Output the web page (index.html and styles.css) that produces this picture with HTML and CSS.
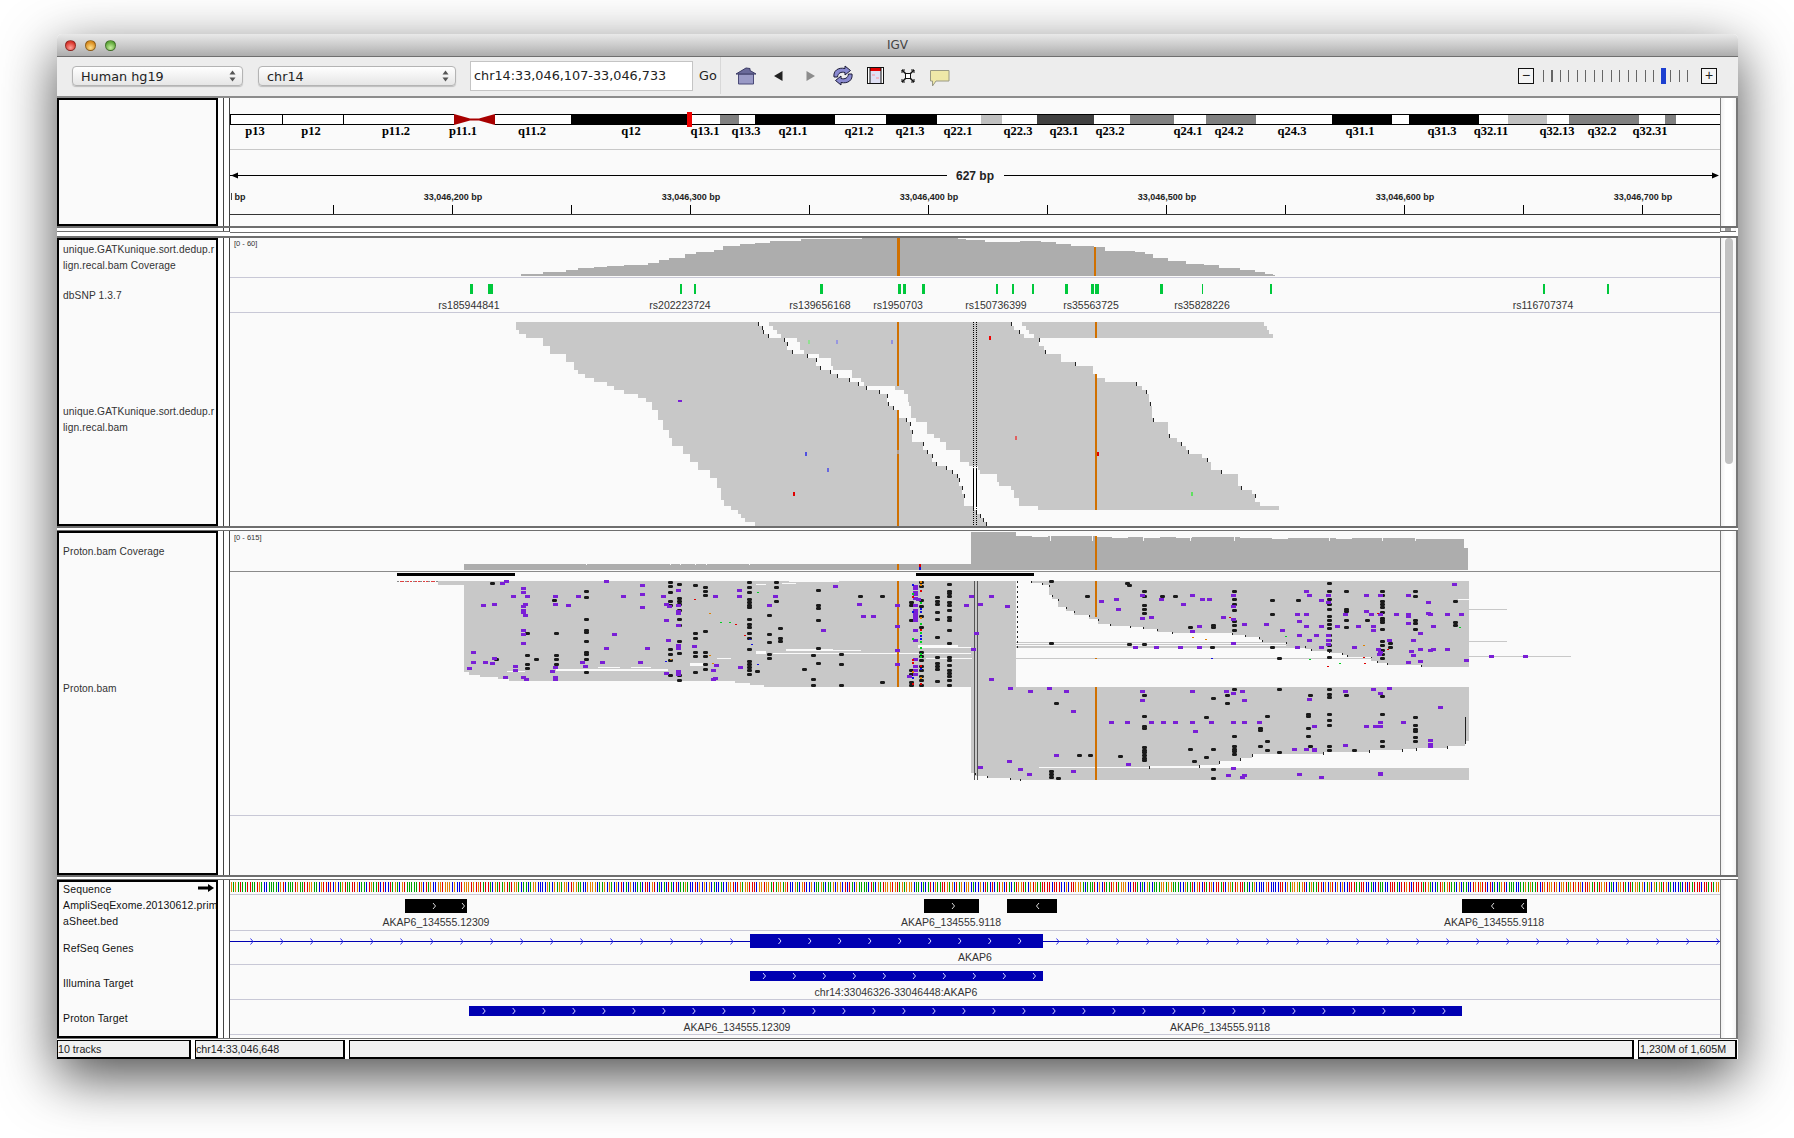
FILE: index.html
```html
<!DOCTYPE html>
<html>
<head>
<meta charset="utf-8">
<title>IGV</title>
<link rel="stylesheet" href="styles.css">
</head>
<body>
<div class="window">

  <div class="titlebar">
    <span class="light light-red"></span>
    <span class="light light-yellow"></span>
    <span class="light light-green"></span>
    <span class="title">IGV</span>
  </div>

  <div class="toolbar">
    <div class="combo combo-genome">Human hg19
      <svg class="updown" width="7" height="12" viewBox="0 0 7 12"><path d="M3.500 0.500L6.500 4.500H0.500Z M3.500 11.500L0.500 7.500H6.500Z" fill="#555"/></svg>
    </div>
    <div class="combo combo-chr">chr14
      <svg class="updown" width="7" height="12" viewBox="0 0 7 12"><path d="M3.500 0.500L6.500 4.500H0.500Z M3.500 11.500L0.500 7.500H6.500Z" fill="#555"/></svg>
    </div>
    <div class="locus">chr14:33,046,107-33,046,733</div>
    <div class="go">Go</div>
    <div class="tools">
      <div class="tool">
        <svg width="22" height="18" viewBox="0 0 22 18">
          <path d="M3.500 7H18.500V17H3.500Z" fill="#9a9ac6" stroke="#4a4a78"/>
          <path d="M1 7L11 1L15 1.500V3.500L21 7Z" fill="#6a6a9a" stroke="#3c3c66"/>
        </svg>
      </div>
      <div class="tool">
        <svg width="9" height="10" viewBox="0 0 9 10"><path d="M8.500 0V10L0 5Z" fill="#222"/></svg>
      </div>
      <div class="tool">
        <svg width="9" height="10" viewBox="0 0 9 10"><path d="M0.500 0V10L9 5Z" fill="#8c8c8c"/></svg>
      </div>
      <div class="tool">
        <svg width="22" height="21" viewBox="0 0 22 21">
          <path d="M2 12C1 6 6 2 13 3.500V1L18.500 5.500L13 10V7.500C9 6.500 6 8 5.500 12Z" fill="#8a8ad0" stroke="#1c1c3a"/>
          <path d="M20 9C21 15 16 19 9 17.500V20L3.500 15.500L9 11V13.500C13 14.500 16 13 16.500 9Z" fill="#8a8ad0" stroke="#1c1c3a"/>
        </svg>
      </div>
      <div class="tool">
        <svg width="17" height="17" viewBox="0 0 17 17">
          <rect x="0.500" y="0.500" width="16" height="16" fill="#fff" stroke="#111"/>
          <rect x="3" y="1" width="11" height="15" fill="#dfe0f4"/>
          <rect x="3" y="1" width="11" height="3" fill="#e00000"/>
          <path d="M3 1V16M14 1V16" stroke="#111"/>
          <path d="M5 7h3v2h-3zM9 10h3v2h-3z" fill="#eeb8c8"/>
        </svg>
      </div>
      <div class="tool">
        <svg width="14" height="14" viewBox="0 0 14 14">
          <rect x="4.500" y="4.500" width="5" height="5" fill="#fff" stroke="#111"/>
          <path d="M1 1L4.500 4.500M13 1L9.500 4.500M1 13L4.500 9.500M13 13L9.500 9.500" stroke="#111" stroke-width="1.500"/>
          <path d="M1 4V1H4M10 1H13V4M1 10V13H4M10 13H13V10" fill="none" stroke="#111"/>
        </svg>
      </div>
      <div class="tool tool-note">
        <svg width="20" height="17" viewBox="0 0 20 17">
          <path d="M0.500 0.500H19V11H6L2.500 16V11H0.500Z" fill="#efe8a8" stroke="#9a9a84"/>
        </svg>
      </div>
    </div>
    <div class="zoombar">
      <div class="zoombtn">&minus;</div>
      <div class="zoomticks"><span class="zoomthumb"></span></div>
      <div class="zoombtn">+</div>
    </div>
  </div>

  <div class="row row-header">
    <div class="names"></div>
    <div class="attr"></div>
    <div class="data">
      <svg id="header" class="canvas" width="1490" height="128" viewBox="230 98 1490 128">
        <g class="cyto">
          <text x="255" y="135">p13</text><text x="311" y="135">p12</text><text x="396" y="135">p11.2</text>
          <text x="463" y="135">p11.1</text><text x="532" y="135">q11.2</text><text x="631" y="135">q12</text>
          <text x="705" y="135">q13.1</text><text x="746" y="135">q13.3</text><text x="793" y="135">q21.1</text>
          <text x="859" y="135">q21.2</text><text x="910" y="135">q21.3</text><text x="958" y="135">q22.1</text>
          <text x="1018" y="135">q22.3</text><text x="1064" y="135">q23.1</text><text x="1110" y="135">q23.2</text>
          <text x="1188" y="135">q24.1</text><text x="1229" y="135">q24.2</text><text x="1292" y="135">q24.3</text>
          <text x="1360" y="135">q31.1</text><text x="1442" y="135">q31.3</text><text x="1491" y="135">q32.11</text>
          <text x="1557" y="135">q32.13</text><text x="1602" y="135">q32.2</text><text x="1650" y="135">q32.31</text>
        </g>
        <text class="span" x="975" y="180">627 bp</text>
        <g class="ruler">
          <text class="ruler-first" x="234.500" y="200">bp</text><text x="453" y="200">33,046,200 bp</text>
          <text x="691" y="200">33,046,300 bp</text><text x="929" y="200">33,046,400 bp</text>
          <text x="1167" y="200">33,046,500 bp</text><text x="1405" y="200">33,046,600 bp</text>
          <text x="1643" y="200">33,046,700 bp</text>
        </g>
      </svg>
    </div>
    <div class="scroll"></div>
  </div>

  <div class="divider-small">
    <div class="names"></div>
    <div class="attr"></div>
    <div class="data"></div>
    <div class="scroll"><span class="nub"></span></div>
  </div>

  <div class="row row-first">
    <div class="names names-first">
      <div class="label">unique.GATKunique.sort.dedup.r</div>
      <div class="label">lign.recal.bam Coverage</div>
      <div class="label label-dbsnp">dbSNP 1.3.7</div>
      <div class="label label-bam">unique.GATKunique.sort.dedup.r</div>
      <div class="label">lign.recal.bam</div>
    </div>
    <div class="attr"></div>
    <div class="data">
      <svg id="first" class="canvas" width="1490" height="288" viewBox="230 238 1490 288">
        <text class="range" x="234" y="246">[0 - 60]</text>
        <g class="feature">
          <text x="469" y="309">rs185944841</text><text x="680" y="309">rs202223724</text>
          <text x="820" y="309">rs139656168</text><text x="898" y="309">rs1950703</text>
          <text x="996" y="309">rs150736399</text><text x="1091" y="309">rs35563725</text>
          <text x="1202" y="309">rs35828226</text><text x="1543" y="309">rs116707374</text>
        </g>
      </svg>
    </div>
    <div class="scroll"><span class="thumb"></span></div>
  </div>

  <div class="gap"></div>

  <div class="row row-proton">
    <div class="names names-proton">
      <div class="label">Proton.bam Coverage</div>
      <div class="label label-proton">Proton.bam</div>
    </div>
    <div class="attr"></div>
    <div class="data">
      <svg id="proton" class="canvas" width="1490" height="344" viewBox="230 531 1490 344">
        <text class="range" x="234" y="540">[0 - 615]</text>
      </svg>
    </div>
    <div class="scroll"></div>
  </div>

  <div class="gap"></div>

  <div class="row row-feature">
    <div class="names names-feature">
      <div class="label label-dark label-seq">Sequence
        <svg class="seqarrow" width="16" height="8" viewBox="0 0 16 8"><path d="M0 2.500H10V0L16 4L10 8V5.500H0Z" fill="#000"/></svg>
      </div>
      <div class="label label-dark">AmpliSeqExome.20130612.prim</div>
      <div class="label label-dark">aSheet.bed</div>
      <div class="label label-dark label-ref">RefSeq Genes</div>
      <div class="label label-dark label-ill">Illumina Target</div>
      <div class="label label-dark label-pro">Proton Target</div>
    </div>
    <div class="attr"></div>
    <div class="data">
      <svg id="features" class="canvas" width="1490" height="158" viewBox="230 880 1490 158">
        <g class="feature">
          <text x="436" y="926">AKAP6_134555.12309</text><text x="951" y="926">AKAP6_134555.9118</text>
          <text x="1494" y="926">AKAP6_134555.9118</text><text x="975" y="961">AKAP6</text>
          <text x="896" y="996">chr14:33046326-33046448:AKAP6</text>
          <text x="737" y="1031">AKAP6_134555.12309</text><text x="1220" y="1031">AKAP6_134555.9118</text>
        </g>
      </svg>
    </div>
    <div class="scroll"></div>
  </div>

  <div class="statusbar">
    <div class="status status-tracks">10 tracks</div>
    <div class="status status-locus">chr14:33,046,648</div>
    <div class="status status-fill"></div>
    <div class="status status-mem">1,230M of 1,605M</div>
  </div>

</div>
<script src="app.js"></script>
</body>
</html>
```

FILE: styles.css
```css
html, body {
  margin: 0;
  background: #fff;
}

body {
  width: 1794px;
  height: 1138px;
  overflow: hidden;
  padding: 34px 0 0 57px;
  box-sizing: border-box;
  font-family: "Liberation Sans", Arial, sans-serif;
}

.window {
  width: 1681px;
  height: 1025px;
  background: #fff;
  border-radius: 5px 5px 0 0;
  box-shadow: 0 18px 55px rgba(0, 0, 0, 0.7);
  display: flex;
  flex-direction: column;
}

/* title bar */

.titlebar {
  height: 23px;
  flex: none;
  display: flex;
  align-items: center;
  padding-left: 8px;
  gap: 9px;
  border-radius: 5px 5px 0 0;
  border-bottom: 1px solid #6f6f6f;
  box-sizing: border-box;
  background: linear-gradient(#e9e9e9, #c9c9c9 55%, #adadad);
  position: relative;
}

.light {
  width: 11px;
  height: 11px;
  border-radius: 50%;
  border: 1px solid rgba(0, 0, 0, 0.35);
  box-sizing: border-box;
}

.light-red { background: radial-gradient(circle at 50% 75%, #ff9f98, #d9342c 70%); }
.light-yellow { background: radial-gradient(circle at 50% 75%, #ffe08a, #d98c1f 70%); }
.light-green { background: radial-gradient(circle at 50% 75%, #c8f0a0, #5fa83a 70%); }

.title {
  position: absolute;
  left: 0;
  right: 0;
  text-align: center;
  font: 12px "DejaVu Sans", sans-serif;
  color: #444;
}

/* toolbar */

.toolbar {
  height: 41px;
  flex: none;
  display: flex;
  align-items: center;
  box-sizing: border-box;
  padding: 0 21px 2px 15px;
  background: #ededed;
  border-bottom: 2px solid #8c8c8c;
  font: 12.8px "DejaVu Sans", sans-serif;
  color: #222;
}

.combo {
  height: 20px;
  line-height: 19px;
  box-sizing: border-box;
  padding-left: 8px;
  border: 1px solid #b4b4b4;
  border-radius: 4px;
  background: linear-gradient(#ffffff, #f2f2f2 50%, #e6e6e6);
  box-shadow: 0 1px 1px rgba(0, 0, 0, 0.2);
  position: relative;
}

.updown {
  position: absolute;
  right: 6px;
  top: 3px;
}

.combo-genome { width: 171px; }
.combo-chr { width: 198px; margin-left: 15px; }

.locus {
  width: 223px;
  height: 30px;
  line-height: 28px;
  margin-left: 14px;
  padding-left: 3px;
  box-sizing: border-box;
  background: #fff;
  border: 1px solid #c4c4c4;
  white-space: nowrap;
}

.go {
  margin-left: 6px;
  width: 21px;
}

.tools {
  display: flex;
  align-items: center;
  padding-left: 9px;
  border-left: 1px solid #d8d8d8;
  height: 37px;
}

.tool {
  width: 32.3px;
  display: flex;
  justify-content: center;
}

.tool-note { margin-top: 5px; }

.zoombar {
  margin-left: auto;
  display: flex;
  align-items: center;
}

.zoombtn {
  width: 16px;
  height: 16px;
  box-sizing: border-box;
  border: 1px solid #111;
  background: #f4f4f4;
  font: 14px/13px "Liberation Sans", sans-serif;
  text-align: center;
}

.zoomticks {
  width: 150px;
  height: 12px;
  margin: 0 8px 0 9px;
  position: relative;
  background: repeating-linear-gradient(90deg, #666 0 1px, transparent 1px 8.5px);
}

.zoomthumb {
  position: absolute;
  left: 118px;
  top: -2px;
  width: 5px;
  height: 16px;
  background: #1c3fd0;
}

/* track rows */

.row, .divider-small {
  flex: none;
  display: flex;
  background: #777;
}

.row-header { height: 128px; border-bottom: 2px solid #6e6e6e; }
.divider-small { height: 8px; border-bottom: 2px solid #6e6e6e; }
.row-first { height: 288px; }
.row-proton { height: 344px; }
.row-feature { height: 158px; }

.divider-small { background: #fff; }
.divider-small .data { background: #fff; border-bottom: 1px solid #6e6e6e; height: 4px; }
.divider-small .names, .divider-small .attr, .divider-small .scroll { height: 4px; border-bottom: 1px solid #6e6e6e; }
.divider-small .names { border: 0; border-bottom: 1px solid #6e6e6e; }

.gap {
  flex: none;
  height: 5px;
  box-sizing: border-box;
  background: #fff;
  border-top: 2px solid #6e6e6e;
  border-bottom: 1px solid #6e6e6e;
}

.names {
  width: 161px;
  flex: none;
  box-sizing: border-box;
  border: 2px solid #000;
  background: #fafafa;
  padding-left: 4px;
  overflow: hidden;
}

.attr {
  width: 12px;
  flex: none;
  background: #fff linear-gradient(#444, #444) no-repeat;
  background-size: 1px 100%;
  background-position: 5px 0;
  border-right: 1px solid #444;
  box-sizing: border-box;
}

.data {
  width: 1490px;
  flex: none;
  background: #fafafa;
  overflow: hidden;
}

.scroll {
  width: 16px;
  flex: none;
  box-sizing: border-box;
  border-left: 1px solid #7c7c7c;
  background: linear-gradient(90deg, #f1f1f1, #fff 30%, #fff 70%, #f4f4f4);
  padding-left: 4px;
}

.thumb {
  display: block;
  width: 8px;
  height: 226px;
  border-radius: 4px;
  background: #c2c2c2;
}

.nub {
  display: block;
  width: 6px;
  height: 3px;
  background: #9a9a9a;
}

.canvas {
  display: block;
  shape-rendering: crispEdges;
}

.label {
  height: 16px;
  line-height: 16px;
  font-size: 10.2px;
  letter-spacing: 0.1px;
  color: #333;
  white-space: nowrap;
  position: relative;
}

.label-dark {
  color: #111;
  font-size: 10.5px;
  letter-spacing: 0.15px;
}

.names-first { padding-top: 2px; }
.label-dbsnp { margin-top: 14px; }
.label-bam { margin-top: 100px; }

.names-proton { padding-top: 11px; }
.label-proton { margin-top: 121px; }

.names-feature { padding-top: 0; }
.label-seq { margin-top: -1px; }
.label-ref { margin-top: 11px; }
.label-ill { margin-top: 19px; }
.label-pro { margin-top: 19px; }

.seqarrow {
  position: absolute;
  left: 135px;
  top: 3px;
}

/* svg text */

.cyto text {
  font: bold 12.5px "Liberation Serif", serif;
  text-anchor: middle;
  fill: #000;
}

.ruler text {
  font: bold 9px "Liberation Sans", sans-serif;
  text-anchor: middle;
  fill: #222;
}

.ruler .ruler-first { text-anchor: start; }

.span {
  font: bold 12px "Liberation Sans", sans-serif;
  text-anchor: middle;
  fill: #222;
}

.range {
  font: 7.5px "Liberation Sans", sans-serif;
  fill: #333;
}

.feature text {
  font: 10.5px "Liberation Sans", sans-serif;
  text-anchor: middle;
  fill: #333;
}

/* status bar */

.statusbar {
  flex: 1;
  display: flex;
  align-items: stretch;
  background: #fff;
  border-top: 1px solid #777;
  padding-top: 1px;
}

.status {
  box-sizing: border-box;
  border: 1px solid #000;
  border-width: 1px 2px 2px 1px;
  background: #f0f0f0;
  font-size: 10.7px;
  line-height: 16px;
  color: #222;
  white-space: nowrap;
  margin-right: 4px;
}

.status-tracks { width: 134px; }
.status-locus { width: 150px; }
.status-fill { width: 1285px; }
.status-mem { width: 99px; margin-right: 0; padding-left: 1px; }
```

FILE: app.js
```js
// draws the tracks: everything is in window pixel coordinates, the svg viewBoxes line up with them
var NS = "http://www.w3.org/2000/svg";

var READ = "#c8c8c8";
var COVER = "#adadad";
var ORANGE = "#d07000";
var PURPLE = "#7a1fd6";
var SEPARATOR = "#c8c8d6";
var BLUE = "#0000b2";

function add(svg, tag, attrs) {
  var el = document.createElementNS(NS, tag);
  for (var k in attrs) el.setAttribute(k, attrs[k]);
  svg.insertBefore(el, svg.firstElementChild && svg.firstElementChild.tagName === "text" ? svg.firstElementChild : null);
  return el;
}

function rect(svg, x, y, w, h, fill) {
  return add(svg, "rect", { x: Math.round(x), y: Math.round(y), width: Math.max(1, Math.round(w)), height: h, fill: fill });
}

function edgeAt(pts, y) {
  var x = pts[0][1];
  for (var i = 0; i < pts.length; i++) {
    if (pts[i][0] <= y) x = pts[i][1];
  }
  return x;
}

// stacked reads, left and right edges are [y, x] steps
function pile(svg, left, right, from, bottom, fill) {
  var d = "";
  for (var y = from; y < bottom; y++) {
    var a = Math.round(edgeAt(left, y));
    var b = Math.round(edgeAt(right, y));
    if (b > a) d += "M" + a + " " + y + "H" + b + "V" + (y + 1) + "H" + a + "Z";
  }
  add(svg, "path", { d: d, fill: fill || READ });
}

function ticks(svg, pts, h, every) {
  for (var i = 0; i < pts.length; i += every || 1) {
    rect(svg, pts[i][1], pts[i][0], 1, h, "#222");
  }
}

function chevron(svg, x, y, dir, color) {
  add(svg, "path", {
    d: "M" + (x - dir) + " " + (y - 3) + "L" + (x + dir * 1.5) + " " + y + "L" + (x - dir) + " " + (y + 3),
    fill: "none", stroke: color, "stroke-width": 1, style: "shape-rendering:auto"
  });
}

// small repeatable random, so that every load gives the same picture
var seed = 7;
function rnd() {
  seed = (seed * 16807) % 2147483647;
  return (seed % 1000) / 1000;
}

/* ---------- header: cytoband and ruler ---------- */

var header = document.getElementById("header");
var bands = [
  [230, 282, "#fff"], [282, 343, "#fff"], [343, 454, "#fff"],
  [495, 571, "#fff"], [571, 687, "#000"], [687, 720, "#fff"], [720, 739, "#808080"],
  [739, 755, "#fff"], [755, 835, "#000"], [835, 886, "#fff"], [886, 937, "#000"],
  [937, 981, "#fff"], [981, 1002, "#c0c0c0"], [1002, 1037, "#fff"], [1037, 1094, "#404040"],
  [1094, 1130, "#fff"], [1130, 1174, "#808080"], [1174, 1206, "#fff"], [1206, 1256, "#808080"],
  [1256, 1332, "#fff"], [1332, 1392, "#000"], [1392, 1409, "#fff"], [1409, 1479, "#000"],
  [1479, 1508, "#fff"], [1508, 1547, "#c0c0c0"], [1547, 1569, "#fff"], [1569, 1639, "#808080"],
  [1639, 1665, "#fff"], [1665, 1676, "#808080"], [1676, 1720, "#fff"]
];
bands.forEach(function (b) {
  rect(header, b[0], 114, b[1] - b[0], 11, b[2]);
});
rect(header, 230, 114, 224, 1, "#000");
rect(header, 230, 124, 224, 1, "#000");
rect(header, 495, 114, 1225, 1, "#000");
rect(header, 495, 124, 1225, 1, "#000");
[230, 282, 343].forEach(function (x) { rect(header, x, 114, 1, 11, "#000"); });
add(header, "path", { d: "M454 114V125L470 120.500H479L495 125V114L479 118.500H470Z", fill: "#a80000", style: "shape-rendering:auto" });
rect(header, 687, 112, 5, 15, "#f00000");
rect(header, 230, 149, 1490, 1, "#c8c8c8");
rect(header, 230, 175, 717, 1, "#000");
rect(header, 1004, 175, 714, 1, "#000");
add(header, "path", { d: "M231 175.500L238 172.500V178.500Z M1719 175.500L1712 172.500V178.500Z", fill: "#000", style: "shape-rendering:auto" });
for (var t = 333; t < 1700; t += 119) rect(header, t, 205, 1, 10, "#000");
rect(header, 231, 193, 1, 7, "#444");
rect(header, 230, 214, 1490, 1, "#333");

/* ---------- first sample: coverage, dbSNP, reads ---------- */

var first = document.getElementById("first");

var coverage = [
  [521, 274], [543, 272], [566, 270], [578, 268], [594, 267], [607, 266], [624, 265], [648, 263], [659, 260],
  [669, 258], [685, 254], [696, 252], [714, 250], [723, 246], [740, 244], [755, 243], [770, 241], [801, 239],
  [862, 238], [958, 239], [966, 240], [985, 242], [1020, 241], [1041, 242], [1056, 244], [1071, 246], [1094, 247],
  [1105, 251], [1135, 252], [1145, 254], [1153, 258], [1168, 261], [1186, 264], [1204, 265], [1219, 268], [1240, 270],
  [1255, 272], [1265, 274], [1273, 275]
];
coverage.forEach(function (c, i) {
  var next = coverage[i + 1] ? coverage[i + 1][0] : 1275;
  rect(first, c[0], c[1], next - c[0], 276 - c[1], COVER);
});
rect(first, 897, 238, 3, 38, ORANGE);
rect(first, 1094, 247, 2, 29, ORANGE);
rect(first, 230, 277, 1490, 1, SEPARATOR);
rect(first, 230, 312, 1490, 1, SEPARATOR);

var snps = [[470, 3], [488, 5], [680, 2], [694, 2], [820, 3], [898, 3], [903, 3], [922, 3], [996, 2], [1012, 2],
  [1032, 2], [1065, 3], [1091, 3], [1095, 4], [1160, 3], [1202, 1], [1270, 2], [1543, 2], [1607, 2]];
snps.forEach(function (s) { rect(first, s[0], 284, s[1], 10, "#00c83c"); });

var pileALeft = [[322, 516], [330, 519], [334, 526], [338, 543], [346, 550], [354, 566], [362, 574], [370, 578], [374, 585],
  [378, 594], [382, 607], [386, 614], [390, 624], [394, 638], [398, 646], [402, 652], [410, 658], [420, 663], [430, 669],
  [438, 672], [446, 683], [454, 690], [462, 698], [470, 710], [478, 717], [488, 721], [500, 724], [506, 731], [510, 738],
  [514, 741], [518, 745], [522, 755]];
var gapLeft = [[322, 758], [326, 762], [330, 763], [334, 768], [338, 784], [342, 787], [350, 792], [354, 807], [358, 816],
  [366, 820], [370, 830], [374, 837], [378, 849], [382, 858], [386, 866], [390, 879], [394, 887], [402, 888], [406, 893],
  [410, 897], [418, 906], [422, 910], [430, 912], [442, 923], [450, 927], [454, 932], [462, 936], [466, 946], [470, 952],
  [474, 957], [478, 959], [486, 962], [494, 964], [506, 973], [510, 976], [514, 980], [518, 983], [522, 986]];
var gapRight = [[322, 769], [326, 773], [330, 777], [334, 781], [338, 797], [342, 800], [350, 804], [354, 819], [358, 831],
  [366, 833], [370, 852], [378, 861], [382, 864], [386, 895], [390, 904], [394, 908], [402, 909], [406, 911], [418, 916],
  [422, 927], [434, 934], [438, 940], [442, 946], [450, 960], [462, 969], [466, 978], [470, 980], [474, 997], [482, 999],
  [486, 1011], [490, 1014], [498, 1019], [506, 1038]];
var gap2Left = [[322, 1011], [326, 1014], [330, 1019], [334, 1024], [338, 1039], [346, 1044], [350, 1045], [354, 1061],
  [362, 1075], [366, 1093], [374, 1096], [378, 1105], [382, 1136], [386, 1142], [390, 1146], [394, 1149], [402, 1150],
  [406, 1152], [418, 1153], [422, 1168], [434, 1169], [438, 1177], [442, 1181], [446, 1186], [450, 1188], [454, 1202],
  [458, 1207], [462, 1211], [470, 1221], [474, 1238], [486, 1241], [490, 1252], [494, 1255], [502, 1260], [506, 1279]];

pile(first, pileALeft, gapLeft, 322, 526);
pile(first, gapRight, gap2Left, 322, 510);
pile(first, [[322, 1022], [326, 1026], [330, 1029], [334, 1034]], [[322, 1264], [326, 1267], [330, 1269], [334, 1273]], 322, 338);

ticks(first, gapLeft, 4);
ticks(first, gap2Left.slice(0, 34), 4, 2);

rect(first, 897, 322, 2, 64, ORANGE);
rect(first, 897, 410, 2, 40, ORANGE);
rect(first, 897, 450, 2, 4, "#b4a090");
rect(first, 897, 454, 2, 72, ORANGE);
rect(first, 1095, 322, 2, 16, ORANGE);
rect(first, 1095, 374, 2, 136, ORANGE);

for (var d = 322; d < 526; d += 2) {
  var inWhite = d > 466 && d < 506;
  rect(first, 973, d, 1, inWhite ? 2 : 1, "#000");
  rect(first, 976, d, 1, inWhite ? 2 : 1, "#000");
}

[[989, 336, 2, "#f00000"], [1015, 436, 2, "#e06060"], [1097, 452, 2, "#e00000"], [1191, 492, 2, "#60e060"],
  [793, 492, 2, "#e00000"], [805, 452, 2, "#5050e0"], [827, 468, 2, "#6868e0"], [808, 340, 2, "#90e090"],
  [836, 340, 2, "#9898e0"], [891, 340, 2, "#9090e0"], [678, 400, 4, PURPLE]].forEach(function (m) {
  rect(first, m[0], m[1], m[2], m[2] === 4 ? 2 : 4, m[3]);
});

/* ---------- proton sample ---------- */

var proton = document.getElementById("proton");

rect(proton, 464, 564, 508, 6, COVER);
rect(proton, 971, 532, 45, 38, COVER);
for (var c = 1016; c < 1464; c += 16) {
  var level = 536 + Math.round((c - 1016) / 160) + (rnd() > 0.7 ? 1 : 0);
  rect(proton, c, level, 16, 570 - level, COVER);
}
rect(proton, 1464, 548, 4, 22, COVER);
[1143, 1234, 1329, 1382, 1415, 1050, 1092, 1190].forEach(function (n) { rect(proton, n, 536, 1, 5, "#fafafa"); });
[586, 670, 680, 695, 706, 749].forEach(function (n) { rect(proton, n, 564, 1, 1, "#fafafa"); });
rect(proton, 897, 564, 2, 6, ORANGE);
rect(proton, 1095, 536, 2, 34, ORANGE);
rect(proton, 919, 564, 2, 3, "#e00000");
rect(proton, 919, 567, 2, 3, "#1010d0");
rect(proton, 230, 571, 1490, 1, "#8a8a8a");
rect(proton, 397, 573, 118, 3, "#000");
rect(proton, 916, 573, 118, 3, "#000");

// left block and the strip the reads hang from
pile(proton, [[581, 438]], [[581, 464]], 581, 585);
pile(proton, [[581, 464], [672, 469], [675, 480], [677, 498], [679, 509], [681, 735], [683, 750], [685, 764]], [[581, 1016]], 581, 687);

// upper right block
var upperRight = [[581, 1031], [583, 1042], [585, 1049], [595, 1052], [599, 1058], [607, 1066], [611, 1074], [615, 1089],
  [619, 1098], [624, 1110], [626, 1130], [627, 1143], [629, 1157], [632, 1172], [633, 1232], [635, 1245], [637, 1259],
  [640, 1262], [642, 1286], [646, 1305], [649, 1311], [651, 1329], [653, 1342], [655, 1347], [657, 1371], [661, 1377],
  [663, 1387], [665, 1421]];
pile(proton, upperRight, [[581, 1469]], 581, 667);
ticks(proton, upperRight, 2);

// lower right block
var lowerRight = [[687, 1469], [741, 1465], [746, 1447], [748, 1416], [749, 1402], [750, 1369], [752, 1323], [754, 1252],
  [758, 1240], [761, 1219], [765, 1199], [766, 1149], [767, 1039], [768, 1469]];
pile(proton, [[687, 971], [773, 975], [776, 987], [778, 1010]], lowerRight, 687, 780);
ticks(proton, lowerRight.slice(1, 12), 3);
rect(proton, 1465, 717, 1, 24, "#222");
ticks(proton, [[773, 975], [776, 987], [778, 1010], [779, 1020]], 2);

// thin reads across the white gap
rect(proton, 1016, 642, 270, 1, READ);
rect(proton, 1016, 644, 270, 1, READ);
rect(proton, 1016, 646, 289, 2, READ);
rect(proton, 1016, 658, 357, 1, READ);
rect(proton, 1469, 609, 38, 1, READ);
rect(proton, 1469, 641, 38, 1, READ);
rect(proton, 1469, 656, 102, 1, READ);

// white strands inside the left block
[[556, 669, 112, 2], [598, 667, 22, 1], [631, 667, 20, 1], [507, 671, 18, 1], [756, 651, 10, 3], [773, 653, 198, 1],
  [786, 649, 47, 2], [833, 650, 28, 1], [918, 645, 40, 3], [958, 647, 13, 1], [926, 658, 46, 1], [690, 663, 16, 3],
  [717, 658, 14, 1], [756, 584, 10, 1], [782, 583, 14, 1], [789, 581, 50, 1], [1458, 599, 11, 1]].forEach(function (w) {
  rect(proton, w[0], w[1], w[2], w[3], "#fafafa");
});
for (var e = 581; e < 650; e += 5) rect(proton, 1017, e, 1, 2, "#222");

rect(proton, 897, 581, 2, 106, ORANGE);
rect(proton, 1095, 581, 2, 36, ORANGE);
rect(proton, 1095, 658, 2, 1, ORANGE);
rect(proton, 1095, 687, 2, 93, ORANGE);
rect(proton, 974, 581, 1, 199, "#555");
rect(proton, 977, 581, 1, 199, "#555");

// marks are read off two crops of the reference, so they stay in crop units here
function place(list, sx, ox, w, h, color, soft) {
  list.forEach(function (p) {
    var el = rect(proton, p[0] / sx + ox - w / 2, p[1] / 3 + 530 - h / 2, w, h, color);
    if (soft) {
      el.setAttribute("rx", 1.2);
      el.setAttribute("style", "shape-rendering:auto");
    }
  });
}
function crop5(list, w, h, color, soft) { place(list, 2.24, 380, w, h, color, soft); }
function crop6(list, w, h, color, soft) { place(list, 2.412, 950, w, h, color, soft); }
function columns(cols) {
  var out = [];
  cols.forEach(function (col) { col[1].forEach(function (y) { out.push([col[0], y]); }); });
  return out;
}

crop5(columns([
  [650, [156, 170, 186, 213, 227, 358, 372, 390, 437]],
  [671, [162, 205, 213, 222, 240, 267, 285, 333, 370, 437, 451]],
  [707, [165, 309, 324, 366, 378, 426]],
  [730, [171, 183, 195, 303, 366, 378, 402, 417]],
  [827, [156, 171, 186, 207, 216, 225, 231, 267, 282, 291, 309, 324, 358, 393, 402, 411, 420, 432]],
  [888, [156, 171, 213]],
  [872, [255, 312, 336, 372, 384]],
  [897, [294, 324, 333]],
  [982, [180, 225, 234, 270, 354, 399]],
  [970, [375, 447, 465]],
  [1033, [372, 402, 465]],
  [1125, [198, 456]],
  [1077, [198]],
  [1190, [216, 225, 270, 420, 432, 456, 465]],
  [1213, [156, 170, 210, 228, 258, 292, 366, 378, 392, 408, 420, 438, 452, 465]],
  [1248, [201, 213, 222, 246, 267, 321, 381, 399, 408, 417, 453]],
  [1275, [162, 183, 190, 198, 216, 225, 240, 262, 270, 300, 339, 381, 390, 405, 420, 430, 440, 450, 465]],
  [463, [183, 201, 267, 300, 306, 333, 366, 372, 387, 426]],
  [395, [309, 375, 387, 402]],
  [390, [210]],
  [330, [309, 375, 402, 414]],
  [350, [387]],
  [260, [387]],
  [252, [159]],
  [845, [423]],
  [950, [417]]
]), 5, 3, "#1a1a1a", true);

crop5([[284, 153], [508, 153], [274, 159], [589, 165], [1020, 168], [322, 174], [322, 186], [668, 180], [806, 180], [589, 194],
  [300, 198], [330, 200], [392, 198], [444, 198], [546, 198], [636, 198], [752, 198], [806, 198], [887, 198], [231, 225],
  [257, 222], [327, 222], [322, 228], [392, 222], [423, 225], [589, 231], [641, 222], [648, 228], [668, 225], [872, 225],
  [1073, 222], [322, 240], [322, 246], [327, 255], [668, 243], [668, 251], [641, 270], [668, 286], [1084, 258], [1105, 258],
  [1159, 225], [321, 300], [322, 312], [525, 312], [993, 300], [1159, 288], [647, 330], [322, 339], [668, 345], [668, 354],
  [705, 348], [508, 354], [599, 354], [210, 366], [1159, 360], [257, 384], [210, 396], [236, 396], [253, 399], [498, 396],
  [583, 396], [454, 396], [304, 408], [200, 416], [304, 422], [392, 411], [386, 423], [460, 408], [807, 411], [753, 406],
  [641, 429], [668, 423], [668, 432], [748, 420], [1159, 402], [280, 441], [322, 441], [328, 447], [392, 441], [392, 447],
  [752, 444], [748, 447], [1185, 438], [1200, 168], [1200, 174], [1200, 186], [1200, 192], [1200, 204], [1207, 207], [1200, 225],
  [1200, 240], [1200, 246], [1200, 252], [1200, 258], [1200, 264], [1200, 270], [1200, 300], [1200, 330], [1200, 387], [1200, 408],
  [1200, 420], [1200, 432]], 5, 3, PURPLE);

crop6(columns([
  [468, [183, 198, 225, 237, 249, 342, 495, 558, 588, 594, 651, 660, 666, 675, 684, 690]],
  [686, [183, 207, 222, 240, 273, 285, 300, 477, 618, 648, 657, 663, 672]],
  [915, [159, 183, 207, 222, 237, 258, 270, 282, 294, 315, 330, 345, 360, 381, 477, 492, 501, 552, 570, 585, 648, 660]],
  [1042, [183, 195, 213, 222, 231, 246, 264, 270, 276, 297, 333, 345, 360, 372, 384, 498, 552, 633, 648]],
  [1122, [183, 198, 270, 279, 297, 561, 585, 597, 603, 621, 633]],
  [956, [183, 237, 243, 270, 291, 495]],
  [1220, [213, 276, 285]],
  [635, [285, 291, 504, 657, 717, 745]],
  [245, [153, 340, 723, 732, 741]],
  [864, [552, 558, 594, 618]],
  [749, [594, 600, 648]],
  [767, [558, 633, 660]],
  [669, [495, 519]]
]), 5, 3, "#1a1a1a", true);

crop6([[513, 198], [543, 198], [331, 198], [777, 210], [840, 210], [777, 252], [1008, 270], [1062, 351], [1062, 339], [580, 291],
  [427, 159], [433, 165], [257, 519], [619, 561], [870, 495], [580, 657], [795, 666], [869, 648], [975, 660], [411, 678], [313, 675],
  [338, 675], [590, 693], [619, 681], [262, 745], [795, 477], [434, 343], [634, 352], [779, 352], [795, 385]], 5, 3, "#1a1a1a", true);

crop6([[51, 198], [101, 198], [39, 225], [73, 222], [138, 228], [63, 309], [56, 357], [101, 447], [147, 474], [193, 483], [239, 474],
  [280, 483], [298, 543], [258, 675], [143, 693], [73, 711], [171, 717], [192, 732], [297, 723], [464, 195], [584, 195], [683, 195],
  [912, 195], [1004, 195], [1039, 195], [1107, 195], [859, 183], [866, 195], [1216, 162], [366, 213], [401, 207], [510, 207], [608, 207],
  [625, 207], [895, 210], [912, 216], [1153, 216], [562, 222], [683, 228], [406, 237], [837, 252], [859, 252], [953, 252], [1004, 243],
  [1016, 252], [1038, 252], [1078, 252], [1107, 252], [1107, 258], [1153, 249], [1158, 252], [1199, 252], [1233, 252], [659, 261],
  [487, 261], [464, 264], [683, 267], [842, 273], [1107, 279], [763, 282], [711, 282], [601, 288], [859, 288], [895, 288], [934, 288],
  [986, 288], [1021, 288], [1165, 288], [1021, 300], [584, 303], [803, 300], [1136, 309], [843, 315], [883, 315], [912, 315], [866, 330],
  [912, 330], [1119, 330], [1061, 330], [683, 339], [912, 342], [447, 352], [499, 352], [555, 352], [601, 352], [837, 352], [895, 352],
  [975, 351], [1033, 357], [1112, 363], [1136, 357], [1165, 357], [1199, 357], [1158, 360], [1038, 366], [1119, 375], [1245, 390],
  [1136, 393], [1107, 397], [1037, 372], [1307, 379], [1387, 379], [464, 483], [584, 483], [666, 483], [705, 483], [953, 483], [1021, 477],
  [1061, 474], [683, 489], [1039, 489], [866, 507], [464, 510], [711, 510], [1182, 531], [390, 576], [429, 576], [487, 576], [516, 576],
  [545, 576], [584, 576], [630, 576], [683, 576], [711, 576], [746, 576], [878, 588], [1004, 588], [1027, 588], [1038, 576], [1038, 588],
  [1095, 576], [591, 603], [1158, 630], [1158, 642], [1158, 648], [953, 645], [832, 657], [859, 657], [878, 657], [878, 660], [430, 702],
  [683, 714], [671, 735], [711, 735], [705, 741], [843, 732], [895, 741], [1038, 732], [1038, 729]], 5, 3, PURPLE);

// small base mismatches
var hues = ["#e00000", "#1010e0", "#00d020", "#e08000"];
for (var b = 581; b < 686; b += 3) {
  if (rnd() > 0.35) rect(proton, 920, b, 2, 2, hues[Math.floor(rnd() * 4)]);
  if (rnd() > 0.8) rect(proton, 912, b, 2, 2, hues[Math.floor(rnd() * 4)]);
}
for (var q = 0; q < 14; q++) {
  rect(proton, 1170 + rnd() * 290, 610 + rnd() * 60, 2, 1, hues[Math.floor(rnd() * 4)]);
  rect(proton, 660 + rnd() * 100, 590 + rnd() * 80, 2, 1, hues[Math.floor(rnd() * 4)]);
}
for (var r = 0; r < 16; r++) rect(proton, 397 + r * 2.6, 581, 2, 1, r % 3 ? "#e04040" : "#888");

rect(proton, 230, 815, 1490, 1, SEPARATOR);

/* ---------- sequence and feature tracks ---------- */

var features = document.getElementById("features");

var bases = ["#00a000", "#e00000", "#0000e0", "#e08000"];
for (var s = 230.5; s < 1720; s += 2.38) {
  rect(features, s, 882, 1, 10, bases[Math.floor(rnd() * 4)]);
}

[894, 930, 964, 999, 1034].forEach(function (y) { rect(features, 230, y, 1490, 1, SEPARATOR); });

function box(x1, x2, y, h, color, marks, dir, markColor) {
  rect(features, x1, y, x2 - x1, h, color);
  marks.forEach(function (m) { chevron(features, m, y + h / 2, dir, markColor); });
}

box(405, 467, 899, 14, "#000", [434, 463], 1, "#ddd");
box(924, 979, 899, 14, "#000", [953], 1, "#ddd");
box(1007, 1057, 899, 14, "#000", [1038], -1, "#ddd");
box(1462, 1527, 899, 14, "#000", [1493, 1523], -1, "#ddd");

rect(features, 230, 941, 1490, 1, BLUE);
for (var i1 = 251.5; i1 < 745; i1 += 30) chevron(features, i1, 941.5, 1, "#3030f0");
for (var i2 = 1057.5; i2 < 1720; i2 += 30) chevron(features, i2, 941.5, 1, "#3030f0");

function series(from, to) {
  var out = [];
  for (var x = from; x <= to; x += 30) out.push(x);
  return out;
}
box(750, 1043, 934, 14, BLUE, series(779.5, 1020), 1, "#d8d8ff");
box(750, 1043, 971, 10, BLUE, series(764, 1035), 1, "#d8d8ff");
box(469, 1462, 1006, 10, BLUE, series(483.7, 1444), 1, "#d8d8ff");
```
